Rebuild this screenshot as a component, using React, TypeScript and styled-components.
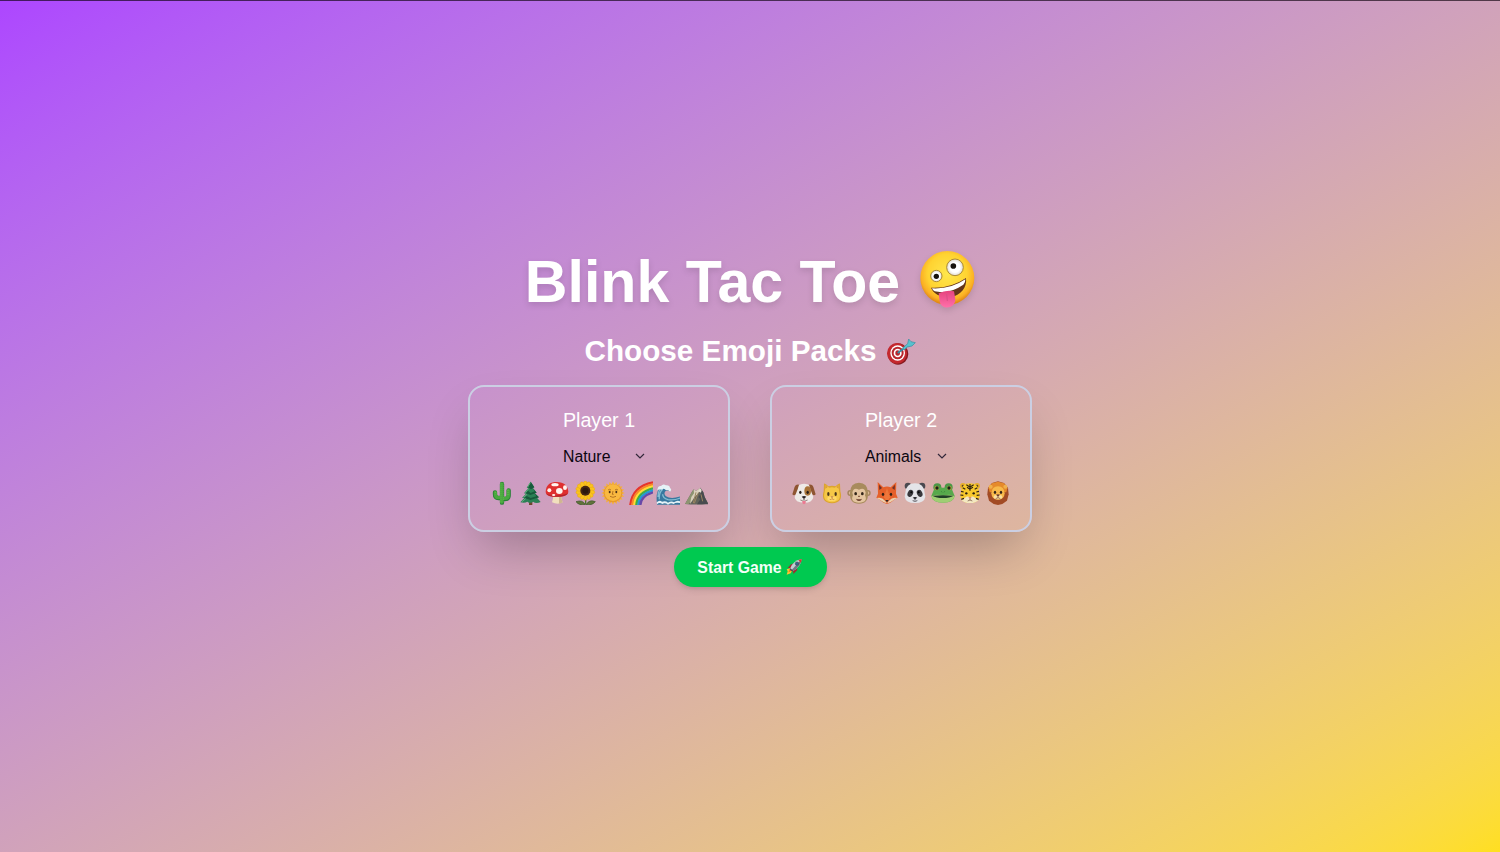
import React from "react";
import styled, { createGlobalStyle } from "styled-components";

const GlobalStyle = createGlobalStyle`
  * { box-sizing: border-box; }
  html, body { margin: 0; padding: 0; }
  body { font-family: "Liberation Sans", Arial, sans-serif; overflow: hidden; }
  svg { display: block; flex: none; }
`;

const Page = styled.main`
  height: 100vh;
  min-height: 852px;
  display: flex;
  flex-direction: column;
  align-items: center;
  padding-top: 249px;
  border-top: 1px solid rgba(10, 0, 10, 0.65);
  background: linear-gradient(to bottom right in oklab, #ad46ff, #ffdf20) border-box;
  color: #fff;
`;

const Title = styled.h1`
  margin: 0 0 22px;
  height: 60px;
  display: flex;
  align-items: flex-start;
  gap: 20px;
  font-size: 59.1px;
  line-height: 63px;
  font-weight: 700;
  white-space: nowrap;
  filter: drop-shadow(0 3px 3px rgba(0, 0, 0, 0.12));
`;

const Subtitle = styled.h2`
  margin: 0 0 17px;
  height: 36px;
  display: flex;
  align-items: flex-start;
  gap: 9px;
  font-size: 29.7px;
  line-height: 38px;
  font-weight: 700;
  white-space: nowrap;

  svg { margin-top: 6px; }
`;

const Players = styled.section`
  display: flex;
  gap: 40px;
`;

const Card = styled.article`
  width: 262px;
  height: 147px;
  padding-top: 19px;
  display: flex;
  flex-direction: column;
  align-items: center;
  border: 2px solid #cbcfe3;
  border-radius: 16px;
  box-shadow: 0 25px 50px -12px rgba(0, 0, 0, 0.25);
`;

const PlayerName = styled.h3`
  margin: 0 0 11px;
  font-size: 19.7px;
  line-height: 28px;
  font-weight: 400;
`;

const PackSelect = styled.button`
  width: 98px;
  height: 24px;
  margin: 0 0 12px;
  padding: 0 3.5px 0 13px;
  display: flex;
  align-items: center;
  justify-content: space-between;
  border: 0;
  background: none;
  color: #0b0610;
  font: 400 15.8px/24px "Liberation Sans", Arial, sans-serif;

  svg { margin-bottom: 2px; }
`;

const EmojiRow = styled.div`
  display: flex;
  gap: 3.8px;
`;

const StartButton = styled.button`
  width: 153px;
  height: 40px;
  margin-top: 15px;
  padding: 2px 0 0;
  display: flex;
  align-items: center;
  justify-content: center;
  gap: 4px;
  border: 0;
  border-radius: 20px;
  background: #00c950;
  color: #f4fff8;
  font: 700 15.8px/24px "Liberation Sans", Arial, sans-serif;
  box-shadow: 0 4px 6px -1px rgba(0, 0, 0, 0.1), 0 2px 4px -2px rgba(0, 0, 0, 0.1);

  svg { margin-top: -3px; }
`;

const Glyph = ({ children }: { children: React.ReactNode }) => (
  <svg width="24" height="24" viewBox="0 0 72 72">{children}</svg>
);

const ZanyFace = () => (
  <svg width="55" height="58" viewBox="0 0 165 174" aria-hidden="true">
    <defs>
      <radialGradient id="zany" cx=".5" cy=".42" r=".56">
        <stop offset="0" stopColor="#ffe74d" />
        <stop offset=".65" stopColor="#ffd331" />
        <stop offset=".88" stopColor="#fbb024" />
        <stop offset="1" stopColor="#e18a16" />
      </radialGradient>
      <radialGradient id="eye">
        <stop offset=".6" stopColor="#fff" />
        <stop offset="1" stopColor="#dfd9cf" />
      </radialGradient>
      <linearGradient id="tongue" x2="0" y2="1">
        <stop offset="0" stopColor="#e6447f" />
        <stop offset="1" stopColor="#ff70aa" />
      </linearGradient>
    </defs>
    <circle cx="82" cy="84" r="81" fill="url(#zany)" />
    <circle cx="49" cy="78" r="17" fill="url(#eye)" stroke="#ab8a34" strokeWidth="3" />
    <circle cx="49" cy="79" r="8" fill="#17120d" />
    <circle cx="105" cy="52" r="25" fill="url(#eye)" stroke="#ab8a34" strokeWidth="3" />
    <circle cx="100" cy="48" r="8.5" fill="#17120d" />
    <path d="M33 113Q92 116 138 84C142 112 122 137 92 141C64 143 40 132 33 113Z" fill="#64351a" />
    <path d="M36 115Q93 118 136 88Q137 97 130 104Q86 134 44 124Q38 121 36 115Z" fill="#fff" />
    <path d="M56 130Q78 119 102 124L106 148C106 179 62 181 59 153Z" fill="url(#tongue)" />
    <path d="M80 132L82 153" stroke="#d34f86" strokeWidth="2.5" />
  </svg>
);

const Target = () => (
  <svg width="30" height="30" viewBox="0 0 90 90" aria-hidden="true">
    <ellipse cx="36" cy="48" rx="31" ry="32" fill="#861b20" />
    <ellipse cx="33" cy="46" rx="30" ry="31" fill="#c4282e" />
    <ellipse cx="35" cy="45" rx="22" ry="23" fill="#fff" />
    <ellipse cx="35" cy="45" rx="18" ry="19" fill="#b9262c" />
    <ellipse cx="35" cy="45" rx="12" ry="13" fill="#fff" />
    <ellipse cx="35" cy="45" rx="7" ry="8" fill="#b9262c" />
    <path d="M35 45L72 18" stroke="#328ca4" strokeWidth="5" />
    <path d="M50 30L65 17L68 3L75 11L88 14L78 24L64 27L55 35Z" fill="#58c1ce" stroke="#368da0" strokeWidth="2" />
  </svg>
);

const Rocket = () => (
  <svg width="17" height="17" viewBox="0 0 51 51" aria-hidden="true">
    <path d="M12 31L2 34L5 40L2 50L14 46L19 38Z" fill="#ffc42e" />
    <path d="M12 34L7 43L17 38Z" fill="#f06b20" />
    <path d="M15 19L26 16L18 30L5 30ZM31 27L34 36L22 48L21 35Z" fill="#a22a30" />
    <path d="M12 32Q20 8 47 3Q45 26 20 40Z" fill="#c2ccd4" />
    <path d="M20 40Q44 27 47 3L17 36Z" fill="#6d7983" />
    <path d="M37 6L47 3L45 14Z" fill="#d9362f" />
    <circle cx="33" cy="17" r="5" fill="#326690" stroke="#3f4b55" strokeWidth="2" />
    <path d="M12 32L20 40" stroke="#4d4850" strokeWidth="4" />
  </svg>
);

const Chevron = () => (
  <svg width="10" height="6" viewBox="0 0 10 6" aria-hidden="true">
    <path d="M1 1L5 5L9 1" fill="none" stroke="#33283a" strokeWidth="1.2" />
  </svg>
);

const Cactus = () => (
  <Glyph>
    <path d="M36 65V9M35 51H25Q15 51 15 40V34M36 54H45Q56 54 56 43V28" fill="none" stroke="#287f36" strokeWidth="13" strokeLinecap="round" />
    <path d="M35 63V9M35 50H25Q16 50 16 40V34M36 52H45Q55 52 55 43V28" fill="none" stroke="#48a83f" strokeWidth="10" strokeLinecap="round" />
    <path d="M33 7V67M40 7V67M16 33V40M54 27V43" stroke="#82cf56" strokeWidth="1.6" strokeDasharray="3 3" />
  </Glyph>
);

const Tree = () => (
  <Glyph>
    <path d="M34 56H43V72H33Z" fill="#70452c" />
    <path d="M38 2L26 20L31 21L18 37L24 38L12 51L19 51L7 64Q21 67 28 62Q37 69 45 62Q54 69 68 63L57 50L63 49L50 36L56 35L44 20L49 19Z" fill="#2c8055" />
    <path d="M38 2L30 19L39 25L49 19ZM24 37L37 42L56 35L44 20L50 31L38 36L30 29ZM19 51L37 57L63 49L49 36L55 46L38 51L26 45Z" fill="#185a3b" />
    <path d="M37 5L29 18M32 23L22 35M27 40L17 49M23 53L12 62" stroke="#64af7d" strokeWidth="3" />
  </Glyph>
);

const Mushroom = () => (
  <Glyph>
    <path d="M24 38H49Q48 54 53 64Q38 72 21 64Q26 51 24 38Z" fill="#f1dfbd" />
    <path d="M42 40H49Q48 54 53 64Q47 68 42 68Z" fill="#cfb690" />
    <path d="M2 32C3 10 17 3 36 3C56 3 69 14 70 32C70 45 49 48 36 47C19 48 2 45 2 32Z" fill="#df3030" />
    <path d="M4 38Q34 50 69 37Q62 48 36 47Q11 48 4 38Z" fill="#b3242b" />
    <g fill="#fff5ef"><ellipse cx="30" cy="11" rx="11" ry="5" /><circle cx="13" cy="28" r="6" /><ellipse cx="43" cy="30" rx="10" ry="9" /><ellipse cx="60" cy="20" rx="6" ry="7" /><ellipse cx="26" cy="42" rx="5" ry="3" /></g>
  </Glyph>
);

const Sunflower = () => (
  <Glyph>
    <path d="M38 45V70" stroke="#4e752b" strokeWidth="4" />
    <path d="M37 71Q29 55 9 62Q18 74 37 71ZM39 71Q49 54 67 62Q57 74 39 71Z" fill="#61743a" stroke="#3d552c" strokeWidth="2" />
    <g fill="#fac41c" stroke="#e49814" strokeWidth="1">
      {Array.from({ length: 14 }, (_, i) => <ellipse key={i} cx="37" cy="10" rx="6" ry="10" transform={`rotate(${i * 25.7} 37 29)`} />)}
    </g>
    <circle cx="37" cy="29" r="15" fill="#452713" />
    <circle cx="37" cy="29" r="9" fill="#2c190d" />
  </Glyph>
);

const Sun = () => (
  <Glyph>
    <g fill="#f6b035">
      {Array.from({ length: 20 }, (_, i) => <path key={i} d="M32 9L36 1L40 9Z" transform={`rotate(${i * 18} 36 36)`} />)}
    </g>
    <circle cx="36" cy="36" r="28" fill="#e89a2a" />
    <circle cx="36" cy="35" r="25" fill="#f9b940" />
    <ellipse cx="26" cy="33" rx="2.8" ry="4" fill="#4e3218" /><ellipse cx="46" cy="33" rx="2.8" ry="4" fill="#4e3218" />
    <path d="M21 27Q26 23 30 27M42 27Q46 23 51 27M36 30L34 40H38M27 46Q36 52 45 46" fill="none" stroke="#a46319" strokeWidth="2.4" />
  </Glyph>
);

const Rainbow = () => (
  <Glyph>
    {["#e6352c", "#f88728", "#ffdd33", "#41ae43", "#2499d5", "#6848a8"].map((color, i) => (
      <path key={color} d={`M${4 + i * 6} 72Q${10 + i * 5} ${16 + i * 6} 72 ${4 + i * 6}`} fill="none" stroke={color} strokeWidth="7" />
    ))}
  </Glyph>
);

const Wave = () => (
  <Glyph>
    <path d="M3 70Q-2 31 13 18Q26 8 39 20Q46 26 42 32Q34 25 28 31Q22 39 30 46Q45 56 74 46V71H3Z" fill="#38789f" />
    <path d="M6 48Q6 24 22 17M10 55Q8 36 20 25M20 40Q20 52 36 56Q55 59 73 51" fill="none" stroke="#85bdd3" strokeWidth="4" />
    <path d="M4 28Q5 14 15 15Q21 7 30 13Q41 12 42 21Q49 26 42 33Q37 25 30 28Q24 20 18 26Q12 22 4 28ZM2 64Q10 56 18 62Q29 58 36 65Q47 58 54 64Q64 56 74 62V67Q60 62 53 69Q43 63 36 71Q27 64 19 69Q10 63 3 70Z" fill="#e6f3f7" />
  </Glyph>
);

const Mountain = () => (
  <Glyph>
    <path d="M3 69L15 48L23 34L29 25L36 30L49 20L58 34L62 48L73 68Q40 73 3 69Z" fill="#63655b" />
    <path d="M3 69L15 48L23 34L29 25L32 37L24 48L26 57L14 69Z" fill="#8d9471" />
    <path d="M29 25L36 30L49 20L41 39L32 48L18 69L22 48L30 37Z" fill="#d8cfb9" />
    <path d="M49 20L50 38L43 48L49 55L39 70H73L62 48L58 34Z" fill="#484c4f" />
    <path d="M36 34L28 66M44 32L38 48L31 67M51 40L56 61" stroke="#9b8560" strokeWidth="3" />
    <path d="M48 21L53 27L51 35L45 32L38 40Z" fill="#e3ddcf" />
  </Glyph>
);

const Dog = () => (
  <Glyph>
    <path d="M12 37Q10 16 27 10Q36 7 46 10Q62 16 60 38L64 47Q63 65 36 65Q9 65 8 48Z" fill="#eeeae7" />
    <path d="M21 11Q9 9 6 24L1 40Q6 46 11 40L17 25ZM51 11Q63 9 66 24L71 40Q66 46 61 40L55 25Z" fill="#8f5532" />
    <ellipse cx="47" cy="30" rx="10" ry="14" fill="#a87338" />
    <ellipse cx="25" cy="34" rx="3.5" ry="5" fill="#251b17" /><ellipse cx="47" cy="34" rx="3.5" ry="5" fill="#251b17" />
    <path d="M29 47Q36 43 43 47L36 54Z" fill="#292124" />
    <path d="M36 52V57M25 57Q33 62 36 56Q40 62 47 57" fill="none" stroke="#6a5450" strokeWidth="2" />
    <path d="M31 60H41V66Q36 73 31 66Z" fill="#ec7991" />
  </Glyph>
);

const Cat = () => (
  <Glyph>
    <path d="M11 31L12 8Q14 5 25 16Q36 12 47 16Q58 5 60 8L61 31Q71 65 36 67Q1 65 11 31Z" fill="#dca42e" />
    <path d="M14 33L17 13L28 20Q36 17 44 20L55 13L58 34Q66 62 36 64Q6 62 14 33Z" fill="#f5c747" />
    <path d="M16 23L17 14L23 18ZM56 23L55 14L49 18Z" fill="#d89538" />
    <ellipse cx="25" cy="39" rx="3.5" ry="6" fill="#48351c" /><ellipse cx="47" cy="39" rx="3.5" ry="6" fill="#48351c" />
    <ellipse cx="36" cy="53" rx="14" ry="7" fill="#ffd967" />
    <path d="M33 47H39L36 50ZM36 50V53M29 55Q34 58 36 53Q39 58 43 55" fill="none" stroke="#b97547" strokeWidth="2" />
  </Glyph>
);

const Monkey = () => (
  <Glyph>
    <circle cx="10" cy="36" r="9" fill="#a3825c" /><circle cx="62" cy="36" r="9" fill="#a3825c" />
    <circle cx="10" cy="36" r="5" fill="#d9b594" /><circle cx="62" cy="36" r="5" fill="#d9b594" />
    <path d="M9 35Q10 5 36 5Q62 5 63 35Q65 68 36 68Q7 68 9 35Z" fill="#a88b5d" />
    <path d="M36 26Q53 18 56 35L54 43Q64 64 36 65Q8 64 18 43L16 35Q19 18 36 26Z" fill="#e4c49f" />
    <ellipse cx="26" cy="38" rx="4" ry="5" fill="#302318" /><ellipse cx="46" cy="38" rx="4" ry="5" fill="#302318" />
    <path d="M33 46H39" stroke="#7e5035" strokeWidth="3" />
    <path d="M27 53Q36 56 45 53Q43 60 36 60Q29 60 27 53Z" fill="#683a2b" />
  </Glyph>
);

const Fox = () => (
  <Glyph>
    <path d="M9 38L8 3L25 19Q36 14 47 19L64 3L63 38L68 50L60 55L46 65L36 69L26 65L12 55L4 50Z" fill="#e5602a" />
    <path d="M13 27L12 11L21 21ZM59 27L60 11L51 21Z" fill="#703027" />
    <path d="M5 51Q20 47 30 59L36 67L26 64L12 55ZM67 51Q52 47 42 59L36 67L46 64L60 55Z" fill="#ead0ae" />
    <path d="M36 21L27 49L36 63L45 49Z" fill="#ef773b" />
    <ellipse cx="24" cy="40" rx="3.5" ry="5" fill="#302016" /><ellipse cx="48" cy="40" rx="3.5" ry="5" fill="#302016" />
    <path d="M31 57H41L36 64Z" fill="#2e2525" />
  </Glyph>
);

const Panda = () => (
  <Glyph>
    <circle cx="15" cy="15" r="10" fill="#4a494f" /><circle cx="57" cy="15" r="10" fill="#4a494f" />
    <path d="M7 36Q9 7 36 7Q63 7 65 36L67 47Q64 66 36 66Q8 66 5 47Z" fill="#e4e4e8" />
    <ellipse cx="22" cy="37" rx="8" ry="11" fill="#38373b" transform="rotate(25 22 37)" />
    <ellipse cx="50" cy="37" rx="8" ry="11" fill="#38373b" transform="rotate(-25 50 37)" />
    <circle cx="25" cy="34" r="3" fill="#050506" /><circle cx="47" cy="34" r="3" fill="#050506" />
    <path d="M29 50Q36 46 43 50L36 55Z" fill="#222126" /><path d="M36 54V58M29 59Q36 63 43 59" fill="none" stroke="#424048" strokeWidth="2.5" />
  </Glyph>
);

const Frog = () => (
  <Glyph>
    <circle cx="19" cy="19" r="12" fill="#4b9847" /><circle cx="53" cy="19" r="12" fill="#4b9847" />
    <path d="M8 28Q12 18 36 20Q60 18 64 28L71 45Q68 65 36 65Q4 65 1 45Z" fill="#57a94c" />
    <path d="M1 46Q8 38 36 43Q64 38 71 46Q67 65 36 65Q5 65 1 46Z" fill="#9fce73" />
    <path d="M4 44Q36 42 68 44Q56 51 36 51Q16 51 4 44Z" fill="#203e28" />
    <circle cx="17" cy="21" r="7" fill="#b3a23c" /><circle cx="55" cy="21" r="7" fill="#b3a23c" />
    <circle cx="18" cy="21" r="5" fill="#17251a" /><circle cx="54" cy="21" r="5" fill="#17251a" />
    <path d="M31 31L33 34M41 31L39 34" stroke="#276b30" strokeWidth="2" />
  </Glyph>
);

const Tiger = () => (
  <Glyph>
    <circle cx="15" cy="15" r="9" fill="#e9b02d" /><circle cx="57" cy="15" r="9" fill="#e9b02d" />
    <circle cx="15" cy="15" r="4" fill="#59412a" /><circle cx="57" cy="15" r="4" fill="#59412a" />
    <path d="M9 33Q10 7 36 7Q62 7 63 33L65 48Q60 66 36 66Q12 66 7 48Z" fill="#f8c92c" />
    <path d="M10 56L21 50Q29 43 36 50Q43 43 51 50L62 56Q54 66 36 66Q18 66 10 56Z" fill="#f3e8c2" />
    <path d="M25 11L34 17H38L47 11M27 19L35 24L45 19M36 9V29M9 31L17 33M63 31L55 33M7 42L16 43M65 42L56 43M10 55L18 52M62 55L54 52M14 20L22 25M58 20L50 25" fill="none" stroke="#302315" strokeWidth="3.5" />
    <circle cx="25" cy="37" r="3.5" fill="#241b13" /><circle cx="47" cy="37" r="3.5" fill="#241b13" />
    <path d="M31 49H41L36 54Z" fill="#cf755e" /><path d="M36 53V57L29 60M36 57L43 60" fill="none" stroke="#6d4837" strokeWidth="2" />
  </Glyph>
);

const Lion = () => (
  <Glyph>
    <path d="M36 1L54 6L66 21L68 40L63 59L49 69L36 72L23 69L9 59L4 40L6 21L18 6Z" fill="#a24b25" />
    <path d="M36 2L54 7L64 22L61 34H11L8 22L18 7Z" fill="#e58a2b" />
    <circle cx="14" cy="17" r="6" fill="#f0b04b" /><circle cx="58" cy="17" r="6" fill="#f0b04b" />
    <path d="M16 37Q18 16 36 16Q54 16 56 37Q55 56 36 56Q17 56 16 37Z" fill="#f7b94a" />
    <ellipse cx="36" cy="48" rx="13" ry="7" fill="#fce0a0" />
    <ellipse cx="27" cy="34" rx="3.5" ry="5" fill="#342419" /><ellipse cx="45" cy="34" rx="3.5" ry="5" fill="#342419" />
    <path d="M30 41Q36 38 42 41L36 47Z" fill="#6b382a" /><path d="M36 46V50L29 53M36 50L43 53" fill="none" stroke="#774630" strokeWidth="2" />
  </Glyph>
);

const players = [
  { name: "Player 1", pack: "Nature", glyphs: [Cactus, Tree, Mushroom, Sunflower, Sun, Rainbow, Wave, Mountain] },
  { name: "Player 2", pack: "Animals", glyphs: [Dog, Cat, Monkey, Fox, Panda, Frog, Tiger, Lion] },
];

export default function App() {
  return (
    <Page>
      <GlobalStyle />
      <Title><span>Blink Tac Toe</span><ZanyFace /></Title>
      <Subtitle><span>Choose Emoji Packs</span><Target /></Subtitle>
      <Players>
        {players.map(({ name, pack, glyphs }) => (
          <Card key={name}>
            <PlayerName>{name}</PlayerName>
            <PackSelect type="button"><span>{pack}</span><Chevron /></PackSelect>
            <EmojiRow>{glyphs.map((Icon, i) => <Icon key={i} />)}</EmojiRow>
          </Card>
        ))}
      </Players>
      <StartButton type="button"><span>Start Game</span><Rocket /></StartButton>
    </Page>
  );
}
